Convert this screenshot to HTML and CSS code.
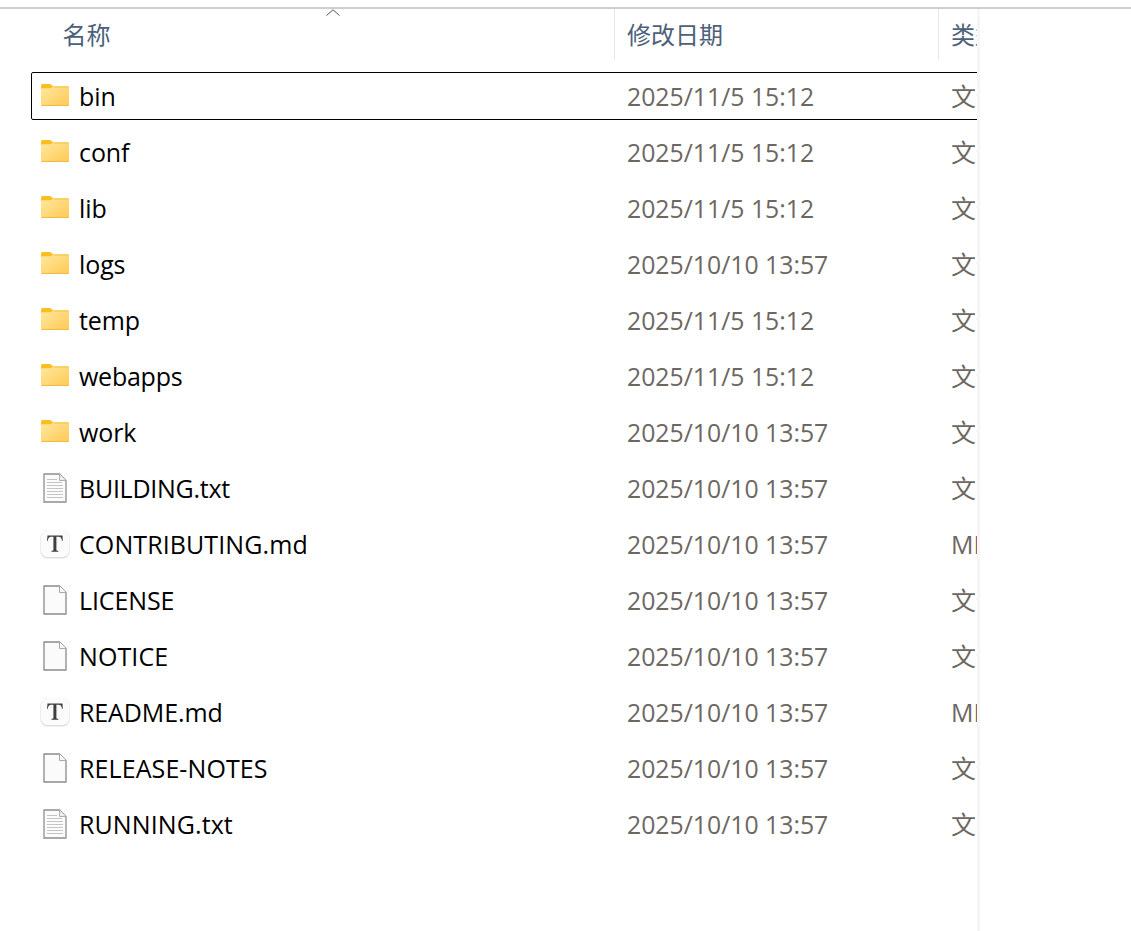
FILE: index.html
```html
<!DOCTYPE html>
<html lang="zh">
<head>
<meta charset="utf-8">
<title>apache-tomcat</title>
<link rel="stylesheet" href="styles.css">
</head>
<body>
<svg class="defs" aria-hidden="true">
  <defs>
    <linearGradient id="fg" x1="0" y1="0" x2="1" y2="1">
      <stop offset="0" stop-color="#ffe7a0"/>
      <stop offset="1" stop-color="#ffca52"/>
    </linearGradient>
    <symbol id="folder" viewBox="0 0 28 22">
      <path d="M0 2.2C0 .9.7 0 1.8 0h6.4c1 0 1.6.3 2.3 1l1.500 1.500H26.600c.8 0 1.400.6 1.400 1.400V8H0z" fill="#fdbc1f"/>
      <path d="M0 5.600c0-.8.6-1.400 1.400-1.400h8.200l2.600-1.700h14.400c.8 0 1.400.6 1.400 1.400v16.600c0 .8-.6 1.500-1.400 1.500H1.400C.6 22 0 21.300 0 20.500z" fill="url(#fg)"/>
      <path d="M.5 21.500h27" stroke="#f5b73c" stroke-width="1"/>
      <path d="M12.200 3h15.300" stroke="#f9c347" stroke-width="1"/>
    </symbol>
    <symbol id="blank" viewBox="0 0 24 30">
      <path d="M1 1h15.500L23 7.500V29H1z" fill="#fbfbfb" stroke="#8a8a8a" stroke-width="1.300"/>
      <path d="M16.500 1v6.500H23" fill="#fff" stroke="#a8a8a8" stroke-width="1"/>
    </symbol>
    <symbol id="text" viewBox="0 0 24 30">
      <path d="M1 1h15.500L23 7.500V29H1z" fill="#fbfbfb" stroke="#8f8f8f" stroke-width="1.300"/>
      <path d="M16.500 1v6.500H23" fill="#eee" stroke="#adadad" stroke-width="1"/>
      <path d="M4 6.500h10M4 9.500h15M4 12.500h16M4 15.500h16M4 18.500h16M4 21.500h16M4 24.500h16" stroke="#c4c4c4" stroke-width="1.100"/>
    </symbol>
    <symbol id="md" viewBox="0 0 30 30">
      <rect x=".5" y="1" width="29" height="28.500" rx="6.500" fill="#dedede"/>
      <rect x="1" y="1" width="28" height="27" rx="6" fill="#fbfbfb"/>
      <path d="M7.500 6.500h15l.3 5.200h-.8c-.4-2.500-1.200-3.900-3.400-3.900h-2.200v12.800c0 1 .5 1.300 2 1.400v.8h-7v-.8c1.500-.1 2-.4 2-1.400V7.800h-2.200c-2.200 0-3 1.400-3.400 3.900h-.8z" fill="#3f3f3f"/>
    </symbol>
  </defs>
</svg>
<div class="topline"></div>
<div class="window">
  <main class="list">
    <div class="header">
      <svg class="sort" viewBox="0 0 14 7" aria-hidden="true"><path d="M.5 6.500 7 .8l6.500 5.700" fill="none" stroke="#555" stroke-width="1"/></svg>
      <div class="h-name">名称</div>
      <div class="h-date">修改日期</div>
      <div class="h-type">类型</div>
    </div>
    <div class="rows">
      <div class="row selected"><svg class="ic"><use href="#folder"/></svg><span class="name">bin</span><span class="date">2025/11/5 15:12</span><span class="type">文件夹</span></div>
      <div class="row"><svg class="ic"><use href="#folder"/></svg><span class="name">conf</span><span class="date">2025/11/5 15:12</span><span class="type">文件夹</span></div>
      <div class="row"><svg class="ic"><use href="#folder"/></svg><span class="name">lib</span><span class="date">2025/11/5 15:12</span><span class="type">文件夹</span></div>
      <div class="row"><svg class="ic"><use href="#folder"/></svg><span class="name">logs</span><span class="date">2025/10/10 13:57</span><span class="type">文件夹</span></div>
      <div class="row"><svg class="ic"><use href="#folder"/></svg><span class="name">temp</span><span class="date">2025/11/5 15:12</span><span class="type">文件夹</span></div>
      <div class="row"><svg class="ic"><use href="#folder"/></svg><span class="name narrow">webapps</span><span class="date">2025/11/5 15:12</span><span class="type">文件夹</span></div>
      <div class="row"><svg class="ic"><use href="#folder"/></svg><span class="name">work</span><span class="date">2025/10/10 13:57</span><span class="type">文件夹</span></div>
      <div class="row"><svg class="ic file"><use href="#text"/></svg><span class="name narrow">BUILDING.txt</span><span class="date">2025/10/10 13:57</span><span class="type">文本文档</span></div>
      <div class="row"><svg class="ic file"><use href="#md"/></svg><span class="name wide">CONTRIBUTING.md</span><span class="date">2025/10/10 13:57</span><span class="type">MD 文件</span></div>
      <div class="row"><svg class="ic file"><use href="#blank"/></svg><span class="name">LICENSE</span><span class="date">2025/10/10 13:57</span><span class="type">文件</span></div>
      <div class="row"><svg class="ic file"><use href="#blank"/></svg><span class="name wide">NOTICE</span><span class="date">2025/10/10 13:57</span><span class="type">文件</span></div>
      <div class="row"><svg class="ic file"><use href="#md"/></svg><span class="name">README.md</span><span class="date">2025/10/10 13:57</span><span class="type">MD 文件</span></div>
      <div class="row"><svg class="ic file"><use href="#blank"/></svg><span class="name wide">RELEASE-NOTES</span><span class="date">2025/10/10 13:57</span><span class="type">文件</span></div>
      <div class="row"><svg class="ic file"><use href="#text"/></svg><span class="name wide">RUNNING.txt</span><span class="date">2025/10/10 13:57</span><span class="type">文本文档</span></div>
    </div>
  </main>
  <div class="edge"></div>
</div>
</body>
</html>
```

FILE: styles.css
```css
* { box-sizing: border-box; }
html, body { margin: 0; height: 100%; overflow: hidden; background: #fff; }
body {
  font-family: "Open Sans", "Noto Sans CJK SC", sans-serif;
  font-size: 25px;
  color: #000;
}
.defs { position: absolute; width: 0; height: 0; }
.topline { height: 2px; margin-top: 7px; background: #cdcdcd; }
.window { display: flex; height: 922px; }
.list { width: 977px; overflow: hidden; flex: none; }
.edge { width: 3px; background: #f6f6f6; flex: none; }

.header {
  position: relative;
  display: grid;
  grid-template-columns: 614px 324px 1fr;
  height: 51px;
  margin-bottom: 12px;
  color: #4c607a;
  font-family: "Noto Sans CJK SC", sans-serif;
  font-size: 24px;
}
.header > div { display: flex; align-items: center; height: 51px; padding-bottom: 2px; line-height: 1; }
.h-name { padding-left: 62.500px; }
.h-date { padding-left: 12px; border-left: 1px solid #e5e5e5; }
.h-type { padding-left: 12px; border-left: 1px solid #e5e5e5; white-space: nowrap; overflow: hidden; }
.sort { position: absolute; left: 326px; top: 0; width: 14px; height: 7px; }

.rows { margin-left: 31px; width: 1000px; display: flex; flex-direction: column; gap: 8px; }
.row {
  display: grid;
  grid-template-columns: 37px 548px 324px 1fr;
  align-items: center;
  height: 48px;
  padding-left: 10px;
  border: 1px solid transparent;
  border-radius: 2px;
  white-space: nowrap;
}
.row.selected { border-color: #000; }
.ic { width: 28px; height: 22px; margin-top: -2px; margin-left: -1px; }
.ic.file { width: 30px; height: 30px; margin-left: -2px; margin-top: -1px; }
.name { line-height: 1; letter-spacing: -0.1px; }
.name.wide { letter-spacing: 0.1px; }
.name.narrow { letter-spacing: -0.25px; }
.date { color: #6d6762; font-size: 24.800px; line-height: 1; }
.type { color: #6d6762; line-height: 1; }
```
